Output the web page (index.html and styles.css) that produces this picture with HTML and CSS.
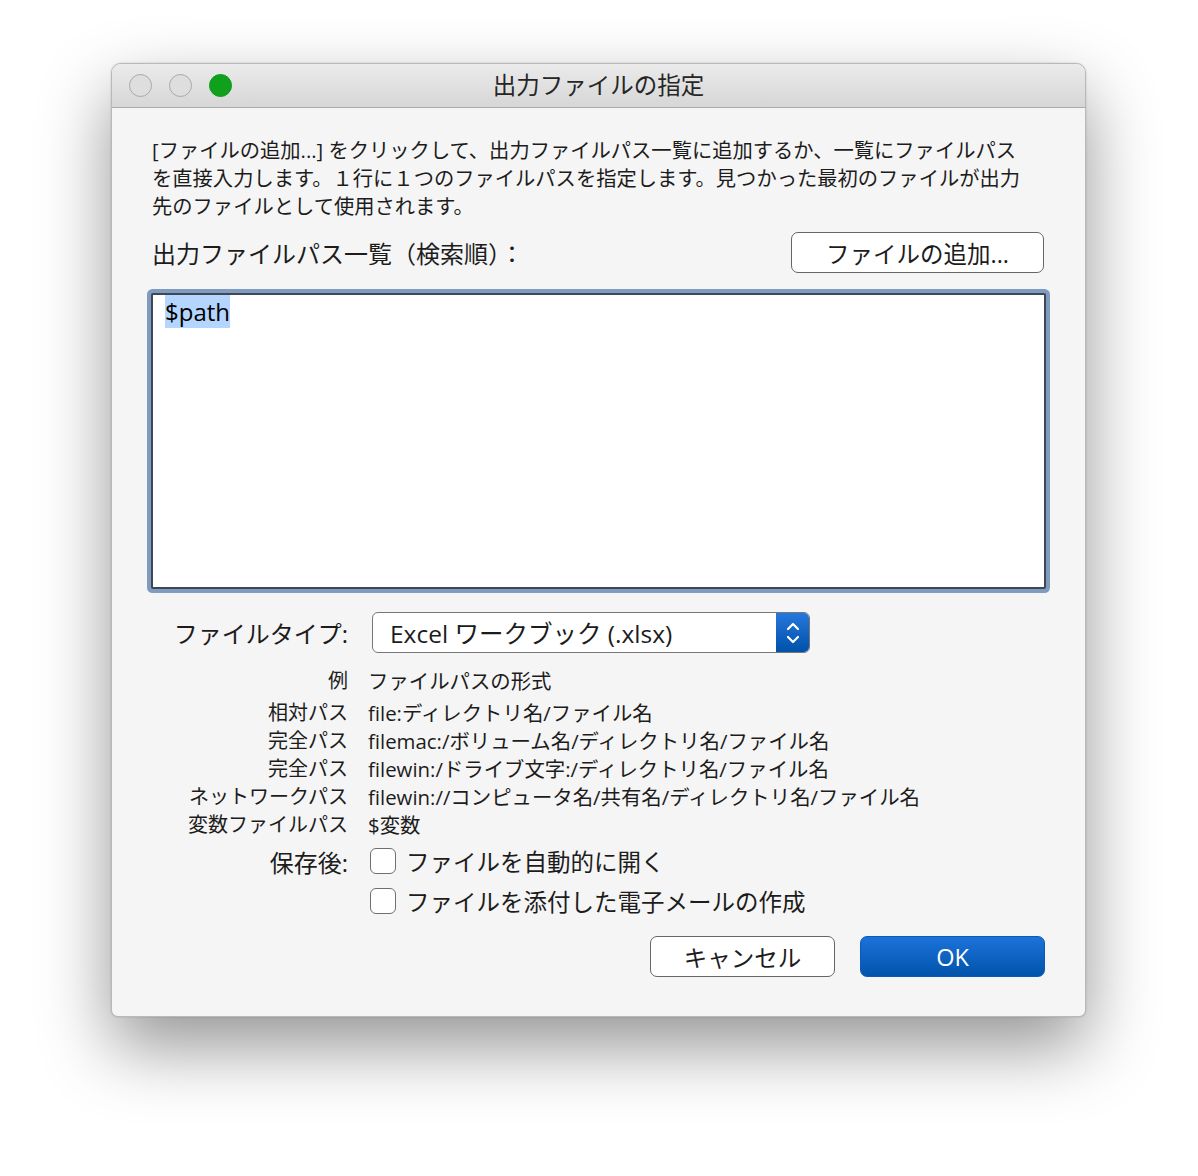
FILE: index.html
```html
<!DOCTYPE html>
<html lang="ja">
<head>
    <meta charset="UTF-8">
    <meta name="viewport" content="width=device-width, initial-scale=1.0">
    <title>出力ファイルの指定</title>
    <link rel="stylesheet" href="styles.css">
</head>
<body>
    <div class="window">
        <div class="titlebar">
            <div class="lights">
                <span class="light"></span>
                <span class="light"></span>
                <span class="light green"></span>
            </div>
            <div class="title">出力ファイルの指定</div>
        </div>

        <div class="content">
            <p class="desc">[ファイルの追加...] をクリックして、出力ファイルパス一覧に追加するか、一覧にファイルパス<br>を直接入力します。１行に１つのファイルパスを指定します。見つかった最初のファイルが出力<br>先のファイルとして使用されます。</p>

            <div class="list-head">
                <span class="list-label">出力ファイルパス一覧（検索順）：</span>
                <button class="btn add">ファイルの追加...</button>
            </div>

            <div class="pathlist"><span class="sel">$path</span></div>

            <div class="form">
                <div class="lbl big">ファイルタイプ:</div>
                <div class="select">
                    <span class="select-text">Excel ワークブック (.xlsx)</span>
                    <span class="stepper">
                        <svg width="16" height="26" viewBox="0 0 16 26">
                            <path d="M3 9 L8 4 L13 9" fill="none" stroke="#fff" stroke-width="2.2" stroke-linecap="round" stroke-linejoin="round"/>
                            <path d="M3 17 L8 22 L13 17" fill="none" stroke="#fff" stroke-width="2.2" stroke-linecap="round" stroke-linejoin="round"/>
                        </svg>
                    </span>
                </div>

                <div class="lbl ex first">例</div>
                <div class="val first">ファイルパスの形式</div>
                <div class="lbl ex">相対パス</div>
                <div class="val">file:ディレクトリ名/ファイル名</div>
                <div class="lbl ex">完全パス</div>
                <div class="val">filemac:/ボリューム名/ディレクトリ名/ファイル名</div>
                <div class="lbl ex">完全パス</div>
                <div class="val">filewin:/ドライブ文字:/ディレクトリ名/ファイル名</div>
                <div class="lbl ex">ネットワークパス</div>
                <div class="val">filewin://コンピュータ名/共有名/ディレクトリ名/ファイル名</div>
                <div class="lbl ex">変数ファイルパス</div>
                <div class="val">$変数</div>

                <div class="lbl big check-lbl">保存後:</div>
                <label class="check first-check"><span class="box"></span>ファイルを自動的に開く</label>
                <div></div>
                <label class="check"><span class="box"></span>ファイルを添付した電子メールの作成</label>
            </div>

            <div class="actions">
                <button class="btn">キャンセル</button>
                <button class="btn ok">OK</button>
            </div>
        </div>
    </div>
</body>
</html>
```

FILE: styles.css
```css
body {
    margin: 0;
    padding-bottom: 160px;
    background-color: #ffffff;
    font-family: "Open Sans", "Noto Sans CJK JP", sans-serif;
    color: #1c1c1c;
}

.window {
    width: 975px;
    box-sizing: border-box;
    margin: 63px 0 0 111px;
    background-color: #f5f5f5;
    border: 1px solid #b9b9b9;
    border-radius: 10px 10px 7px 7px;
    box-shadow: 0 30px 70px rgba(0, 0, 0, 0.42), 0 0 2px rgba(0, 0, 0, 0.2);
    overflow: hidden;
}

.titlebar {
    height: 43px;
    display: flex;
    align-items: center;
    position: relative;
    background: linear-gradient(#ebebeb, #d6d6d6);
    border-bottom: 1px solid #ababab;
}

.lights {
    display: flex;
    gap: 17px;
    padding-left: 17px;
}

.light {
    width: 21px;
    height: 21px;
    border-radius: 50%;
    border: 1.5px solid #a9a9a9;
    background-color: #dedede;
}

.light.green {
    background-color: #10a11c;
    border-color: #0e9a19;
}

.title {
    position: absolute;
    left: 0;
    right: 0;
    text-align: center;
    font-size: 23.5px;
    line-height: 45px;
    color: #262626;
}

.content {
    padding: 28px 40px 39px 40px;
}

.desc {
    margin: 0;
    font-size: 20.3px;
    line-height: 28px;
}

.list-head {
    display: flex;
    justify-content: space-between;
    align-items: center;
    margin-top: 12px;
}

.list-label {
    font-size: 24px;
}

.btn {
    font-family: inherit;
    font-size: 23.5px;
    color: #1c1c1c;
    background-color: #ffffff;
    border: 1.5px solid #666;
    border-radius: 7px;
    height: 41px;
    padding: 0;
    cursor: pointer;
}

.btn.add {
    width: 253px;
    margin-right: 1px;
}

.pathlist {
    margin: 20px -1px 0 -1px;
    height: 288px;
    background-color: #ffffff;
    border: 2px solid #3e4752;
    border-radius: 2px;
    box-shadow: 0 0 0 4px #7f9bbf;
    padding: 2px 12px;
    font-size: 24px;
    line-height: 30px;
}

.sel {
    background-color: #b4d6fe;
    color: #000;
}

.form {
    display: grid;
    grid-template-columns: 196px 1fr;
    column-gap: 20px;
    align-items: center;
    margin-top: 23px;
}

.lbl {
    text-align: right;
    white-space: nowrap;
}

.big {
    font-size: 24px;
}

.select {
    margin-left: 4px;
    width: 438px;
    height: 41px;
    box-sizing: border-box;
    display: flex;
    align-items: center;
    background-color: #ffffff;
    border: 1.5px solid #777;
    border-radius: 6px;
    overflow: hidden;
}

.select-text {
    flex: 1;
    padding-left: 17px;
    font-size: 24.5px;
}

.stepper {
    width: 33px;
    height: 100%;
    display: flex;
    align-items: center;
    justify-content: center;
    background: linear-gradient(#2677dc, #0051a9);
}

.ex, .val {
    font-size: 20px;
    line-height: 28px;
}

.val {
    font-size: 20.4px;
}

.ex.first, .val.first {
    margin-top: 14px;
    margin-bottom: 4px;
}

.check-lbl {
    margin-top: 2px;
}

.check {
    display: flex;
    align-items: center;
    height: 40px;
    margin-left: 2px;
    font-size: 23.5px;
}

.first-check {
    margin-top: 2px;
}

.box {
    width: 26px;
    height: 26px;
    box-sizing: border-box;
    background-color: #ffffff;
    border: 1.5px solid #6f6f6f;
    border-radius: 6px;
    margin-right: 10px;
}

.actions {
    display: flex;
    justify-content: flex-end;
    gap: 25px;
    margin-top: 15px;
}

.actions .btn {
    width: 185px;
}

.btn.ok {
    color: #ffffff;
    border-color: #0a5bb9;
    background: linear-gradient(#1d72d9, #0054ab);
}
```
